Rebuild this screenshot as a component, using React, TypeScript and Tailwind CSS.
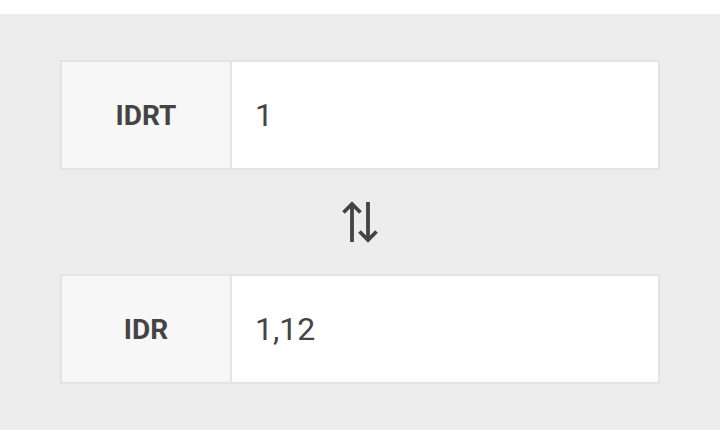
export default function App() {
  const rows = [
    { code: 'IDRT', value: '1' },
    { code: 'IDR', value: '1,12' },
  ];

  const Row = ({ code, value }: { code: string; value: string }) => (
    <div className="flex h-[110px] border-2 border-[#e4e4e4] bg-white">
      <div className="flex w-[168px] items-center justify-center bg-[#f7f7f7] pt-[2px] text-[28px] font-bold text-[#444]">
        {code}
      </div>
      <div className="flex flex-1 items-center border-l-2 border-[#e4e4e4] bg-white pl-[23px] text-[32px] text-[#444]">
        {value}
      </div>
    </div>
  );

  return (
    <div className="min-h-[436px] bg-white pt-[14px] font-['Roboto',sans-serif]">
      <div className="flex h-[416px] flex-col bg-[#ededed] px-[60px] pt-[46px]">
        <Row {...rows[0]} />
        <div className="flex h-[104px] items-center justify-center">
          <svg width="40" height="48" viewBox="0 0 40 48" fill="none" stroke="#444" strokeWidth="3.8">
            <path d="M12 6V44" />
            <path d="M3.5 14.5L12 6L20.5 14.5" />
            <path d="M28 4V42" />
            <path d="M19.5 33.5L28 42L36.5 33.5" />
          </svg>
        </div>
        <Row {...rows[1]} />
      </div>
    </div>
  );
}
